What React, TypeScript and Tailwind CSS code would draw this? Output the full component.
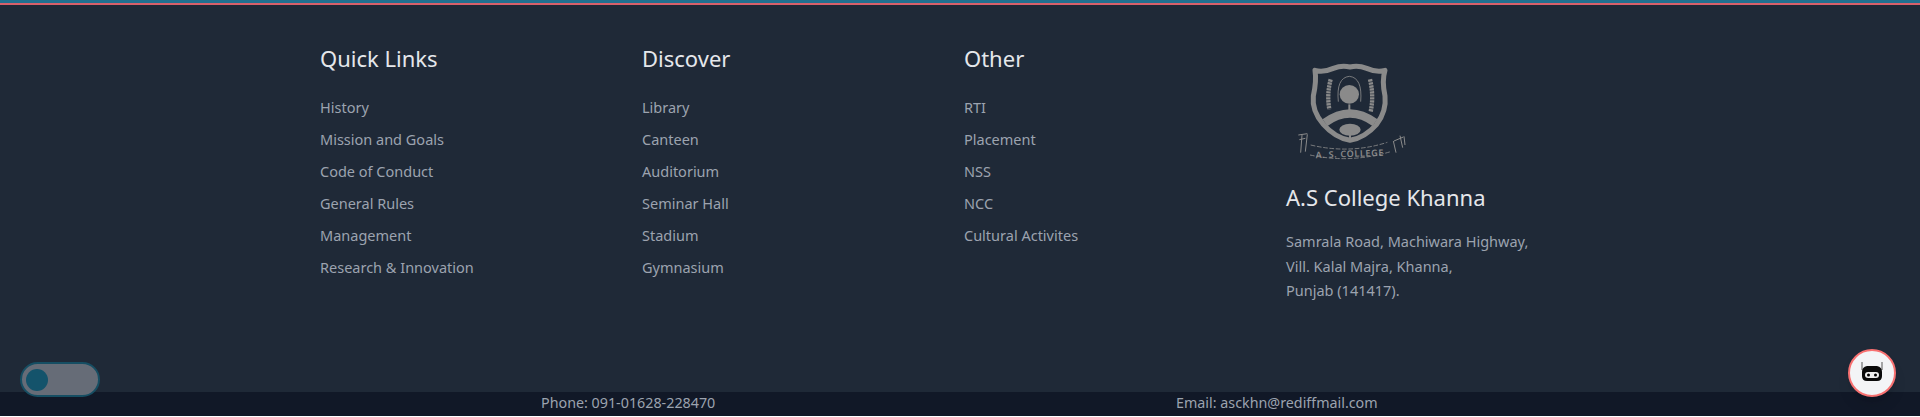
const F = { fontFamily: '"Noto Sans", sans-serif' };

const cols = [
  { title: "Quick Links", links: ["History", "Mission and Goals", "Code of Conduct", "General Rules", "Management", "Research & Innovation"] },
  { title: "Discover", links: ["Library", "Canteen", "Auditorium", "Seminar Hall", "Stadium", "Gymnasium"] },
  { title: "Other", links: ["RTI", "Placement", "NSS", "NCC", "Cultural Activites"] },
];

function Logo() {
  return (
    <svg width="120" height="100" viewBox="60 60 360 300" className="block">
      <g fill="none" stroke="#8a8a8a">
        <path d="M135 88 Q160 95 190 82 Q215 72 240 78 Q265 72 290 82 Q320 95 345 88 Q335 120 345 165 Q350 210 320 250 Q285 290 240 298 Q195 290 160 250 Q125 210 130 165 Q140 120 135 88Z" strokeWidth="15" strokeLinejoin="round" />
        <path d="M182 115 Q170 160 178 205" strokeWidth="13" strokeDasharray="7 2" />
        <path d="M300 115 Q312 165 302 212" strokeWidth="13" strokeDasharray="7 2" />
        <path d="M205 182 Q198 110 238 106 Q278 110 272 182" strokeWidth="2.5" />
        <path d="M165 245 Q240 190 315 245" strokeWidth="25" />
        <path d="M238 190 L238 212" strokeWidth="6" />
        <path d="M240 275 L240 298" strokeWidth="6" />
        <path d="M85 282 L112 278 M88 296 L106 292 M96 282 L92 335 M112 280 L106 332 M372 300 L400 288 M370 300 L378 335 M390 284 L398 320 M402 286 L405 312" strokeWidth="3" />
        <path d="M122 312 Q240 340 352 304" strokeWidth="2.5" strokeDasharray="14 5" />
        <path d="M120 342 Q240 368 362 332" strokeWidth="2.5" strokeDasharray="14 5" />
      </g>
      <ellipse cx="238" cy="160" rx="29" ry="28" fill="#8a8a8a" />
      <ellipse cx="240" cy="266" rx="32" ry="18" fill="#8a8a8a" />
      <text x="240" y="348" textAnchor="middle" fontSize="27" fontWeight="600" fill="#8a8a8a" style={F} letterSpacing="2" transform="rotate(-2 240 348)">A. S. COLLEGE</text>
    </svg>
  );
}

export default function App() {
  return (
    <div className="relative h-[417px] overflow-hidden bg-white" style={F}>
      <div className="h-[3px] bg-[#22708f]" />
      <div className="h-[2px] bg-[#d9606a]" />
      <footer className="flex h-[411px] flex-col bg-[#1f2937]">
        <div className="ml-[320px] grid flex-1 grid-cols-[322px_322px_322px_322px] pt-[33px]">
          {cols.map((c) => (
            <div key={c.title}>
              <h3 className="text-[22px] leading-[40px] text-[#e5e7eb]">{c.title}</h3>
              <ul className="mt-[17px] flex flex-col gap-[8px]">
                {c.links.map((l) => (
                  <li key={l} className="text-[14.5px] leading-[24px] text-[#9ca3af]">{l}</li>
                ))}
              </ul>
            </div>
          ))}
          <div>
            <div className="ml-[4px] mt-[23px]"><Logo /></div>
            <h3 className="mt-[20px] text-[22px] leading-[32px] text-[#e5e7eb]">A.S College Khanna</h3>
            <p className="mt-[16px] text-[14.5px] leading-[24.5px] text-[#9ca3af]">
              Samrala Road, Machiwara Highway,<br />Vill. Kalal Majra, Khanna,<br />Punjab (141417).
            </p>
          </div>
        </div>
        <div className="flex h-[24px] items-center bg-[#111827] pb-[2px] text-[14.3px] text-[#9ca3af]">
          <span className="ml-[541px] w-[635px]">Phone: 091-01628-228470</span>
          <span>Email: asckhn@rediffmail.com</span>
        </div>
      </footer>
      <div className="absolute left-[20px] top-[362px] flex h-[35px] w-[80px] items-center rounded-full border-2 border-[#164e63] bg-[#666c77] pl-[4px]">
        <div className="h-[22px] w-[22px] rounded-full bg-[#14536b]" />
      </div>
      <div className="absolute left-[1848px] top-[349px] flex h-[48px] w-[48px] items-center justify-center rounded-full border-2 border-[#f87171] bg-[#f3f4f6] shadow-lg">
        <svg width="22" height="22" viewBox="0 0 22 22">
          <path d="M1 0V8M21 0V8" stroke="#555" strokeWidth="1" />
          <path d="M6 4H16Q21 5 21 10V14Q21 19 16 19H6Q1 19 1 14V10Q1 5 6 4Z" fill="#0a0a0a" />
          <rect x="4" y="10" width="14" height="6" rx="3" fill="#eee" />
          <circle cx="7.5" cy="13" r="1.5" fill="#000" />
          <circle cx="14.5" cy="13" r="1.5" fill="#000" />
        </svg>
      </div>
    </div>
  );
}
